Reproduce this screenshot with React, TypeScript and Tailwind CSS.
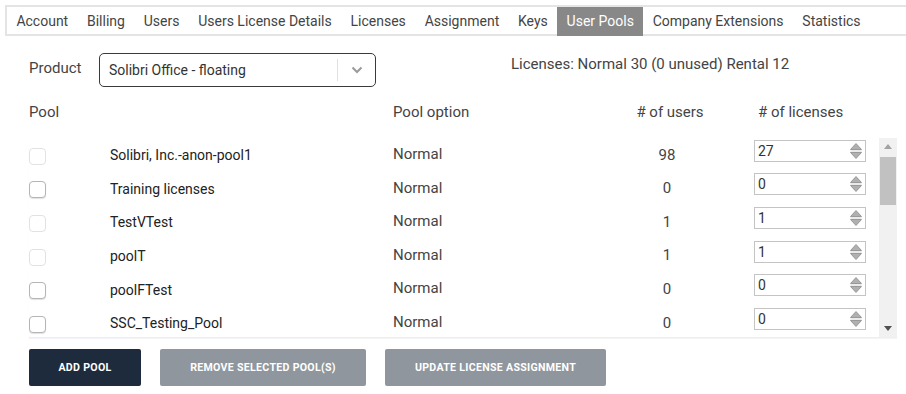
import React from 'react';

const tabs = ['Account', 'Billing', 'Users', 'Users License Details', 'Licenses', 'Assignment', 'Keys', 'User Pools', 'Company Extensions', 'Statistics'];

const pools = [
    { name: 'Solibri, Inc.-anon-pool1', option: 'Normal', users: 98, licenses: 27, disabled: true },
    { name: 'Training licenses', option: 'Normal', users: 0, licenses: 0, disabled: false },
    { name: 'TestVTest', option: 'Normal', users: 1, licenses: 1, disabled: true },
    { name: 'poolT', option: 'Normal', users: 1, licenses: 1, disabled: true },
    { name: 'poolFTest', option: 'Normal', users: 0, licenses: 0, disabled: false },
    { name: 'SSC_Testing_Pool', option: 'Normal', users: 0, licenses: 0, disabled: false },
];

const Spinner = () => (
    <svg width="14" height="18" viewBox="0 0 14 18" className="shrink-0">
        <path d="M7 1.5 L12.5 7.5 L1.5 7.5 Z" fill="#b0b0b0" stroke="#8a8a8a" strokeWidth="0.8" strokeLinejoin="round" />
        <path d="M7 16.5 L12.5 10.5 L1.5 10.5 Z" fill="#b0b0b0" stroke="#8a8a8a" strokeWidth="0.8" strokeLinejoin="round" />
        <line x1="1.5" y1="9" x2="12.5" y2="9" stroke="#d5d5d5" strokeWidth="1" />
    </svg>
);

export default function App() {
    return (
        <div className="w-[906px] h-[394px] bg-white overflow-hidden text-[#333]" style={{ fontFamily: 'Roboto, "Liberation Sans", sans-serif' }}>
            {/* tabs */}
            <div className="ml-[5px] mt-[5px] h-[31px] border-2 border-r-0 border-[#e4e4e4] flex items-stretch text-[14px] text-[#444]">
                {tabs.map(t => (
                    <div
                        key={t}
                        className={`px-[9.4px] flex items-center -mb-[2px] ${t === 'User Pools' ? 'bg-[#888888] text-white' : ''}`}
                    >
                        {t}
                    </div>
                ))}
            </div>

            <div className="pl-[29px]">
                {/* product row */}
                <div className="flex items-start mt-[17px] h-[34px]">
                    <div className="w-[70px] text-[15px] text-[#444] leading-[24px] pt-[3px]">Product</div>
                    <div className="w-[277px] h-[34px] border-[1.5px] border-[#3a3a3a] rounded-[5px] flex items-center">
                        <div className="flex-1 pl-[9px] text-[14px] text-[#333]">Solibri Office - floating</div>
                        <div className="w-[38px] h-[22px] border-l border-[#e0e0e0] flex items-center justify-center">
                            <svg width="12" height="8" viewBox="0 0 12 8">
                                <path d="M1.5 1.5 L6 6 L10.5 1.5" fill="none" stroke="#9a9a9a" strokeWidth="2" />
                            </svg>
                        </div>
                    </div>
                    <div className="ml-[135px] text-[15px] text-[#444] leading-[24px] -mt-[1px]">Licenses: Normal 30 (0 unused) Rental 12</div>
                </div>

                {/* header */}
                <div className="grid grid-cols-[364px_227px_94px_165px] mt-[13px] text-[15px] text-[#444] h-[24px] items-center">
                    <div>Pool</div>
                    <div>Pool option</div>
                    <div className="text-center pl-[6px]">
                        # of users
                    </div>
                    <div className="pl-[44px]"># of licenses</div>
                </div>

                {/* table */}
                <div className="mt-[14px] w-[868px] h-[200px] flex border-b border-[#eeeeee] shadow-[0_1px_1px_rgba(0,0,0,0.04)]">
                    <div className="flex-1 overflow-hidden">
                        {pools.map(p => (
                            <div key={p.name} className="grid grid-cols-[81px_283px_227px_94px_165px] h-[33.6px] items-center">
                                <div>
                                    <div
                                        className={`w-[17px] h-[17px] rounded-[4px] bg-white border ${p.disabled ? 'border-[#e2e2e2]' : 'border-[#b5b5b5] shadow-[0_1px_1px_rgba(0,0,0,0.12)]'} mt-[3px]`}
                                    />
                                </div>
                                <div className="text-[14px] text-[#222] pt-[2px]">{p.name}</div>
                                <div className="text-[15px] text-[#444] -mt-[1px]">{p.option}</div>
                                <div className="text-[15px] text-[#444] text-center">{p.users}</div>
                                <div className="pl-[40px] -mt-[8px]">
                                    <div className="w-[112px] h-[22px] border border-[#c4c4c4] flex items-center pl-[3px] pr-[2px] bg-white">
                                        <span className="flex-1 text-[14px] text-[#333] leading-none">{p.licenses}</span>
                                        <Spinner />
                                    </div>
                                </div>
                            </div>
                        ))}
                    </div>
                    {/* scrollbar */}
                    <div className="w-[18px] bg-[#f1f1f1] flex flex-col items-center">
                        <div className="h-[17px] flex items-center justify-center">
                            <svg width="8" height="5" viewBox="0 0 8 5"><path d="M0 5 L4 0 L8 5 Z" fill="#a3a3a3" /></svg>
                        </div>
                        <div className="w-[16px] h-[48px] bg-[#c1c1c1] mt-[2px]" />
                        <div className="flex-1" />
                        <div className="h-[17px] flex items-center justify-center">
                            <svg width="8" height="5" viewBox="0 0 8 5"><path d="M0 0 L8 0 L4 5 Z" fill="#505050" /></svg>
                        </div>
                    </div>
                </div>

                {/* buttons */}
                <div className="flex gap-[19px] mt-[11px]">
                    <button className="w-[112px] h-[37px] bg-[#1e2b3d] text-white text-[10.6px] font-bold tracking-[0.3px] rounded-[2px]">ADD POOL</button>
                    <button className="w-[206px] h-[37px] bg-[#8f969d] text-white text-[10.6px] font-bold tracking-[0.3px] rounded-[2px]">REMOVE SELECTED POOL(S)</button>
                    <button className="w-[221px] h-[37px] bg-[#8f969d] text-white text-[10.6px] font-bold tracking-[0.3px] rounded-[2px]">UPDATE LICENSE ASSIGNMENT</button>
                </div>
            </div>
        </div>
    );
}
